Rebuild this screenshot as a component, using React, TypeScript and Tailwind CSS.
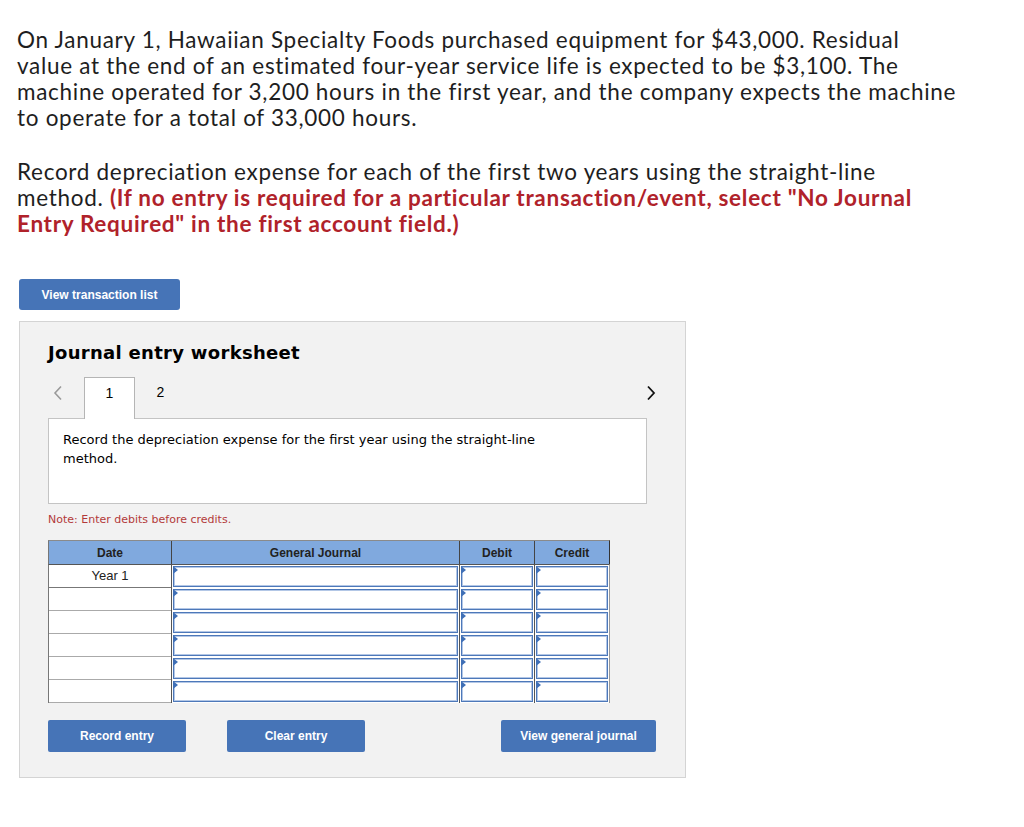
import React from "react";

const Tri = () => (
  <span className="absolute left-[1px] top-[1px] w-0 h-0 border-y-[4px] border-y-transparent border-l-[5px] border-l-[#3f6fb6]" />
);

function InputCell({ w }: { w: string }) {
  return (
    <div className={`relative h-[23px] ${w} border-l border-[#555] bg-white p-[1px]`}>
      <div className="h-full w-full border border-[#4d78b9] shadow-[inset_0_0_0_1px_#b3c7e6] bg-white" />
      <Tri />
    </div>
  );
}

export default function App() {
  const rows = ["Year 1", "", "", "", "", ""];
  return (
    <div className="bg-white min-h-[827px] w-[1024px] text-[#1e1e1e]">
      <div className="pl-[17px] pt-[27px] font-['Lato',sans-serif] text-[22.5px] leading-[26px] tracking-[0.7px] whitespace-nowrap">
        <p>
          On January 1, Hawaiian Specialty Foods purchased equipment for $43,000. Residual
          <br />
          value at the end of an estimated four-year service life is expected to be $3,100. The
          <br />
          machine operated for 3,200 hours in the first year, and the company expects the machine
          <br />
          to operate for a total of 33,000 hours.
        </p>
        <p className="mt-[28px]">
          Record depreciation expense for each of the first two years using the straight-line
          <br />
          method.{" "}
          <span className="font-bold text-[#b0222a]">
            (If no entry is required for a particular transaction/event, select "No Journal
            <br />
            Entry Required" in the first account field.)
          </span>
        </p>
      </div>

      <div className="pl-[19px] mt-[42px]">
        <button className="h-[31px] w-[161px] rounded-[3px] bg-[#4674b7] text-white text-[12px] font-bold font-['Liberation_Sans',Arial,sans-serif]">
          View transaction list
        </button>
      </div>

      <div className="ml-[19px] mt-[11px] w-[667px] border border-[#d4d4d4] bg-[#f2f2f2] pl-[28px] pr-[39px] pt-[20px] pb-[25px] font-['DejaVu_Sans',Verdana,sans-serif]">
        <h2 className="text-[18px] leading-[22px] font-bold tracking-[0.3px] text-black">Journal entry worksheet</h2>

        <div className="mt-[13px] flex items-end w-[610px] justify-between">
          <div className="flex items-end">
            <div className="w-[36px] h-[41px] flex items-center pl-[5px] pb-[10px]">
              <svg width="10" height="16" viewBox="0 0 10 16">
                <path d="M8 1.5 L2 8 L8 14.5" fill="none" stroke="#9a9a9a" strokeWidth="1.6" />
              </svg>
            </div>
            <div className="relative z-10 -mb-px w-[51px] h-[42px] bg-white border border-b-0 border-[#b5b5b5] flex items-center justify-center pb-[10px] text-[14px] font-['Liberation_Sans',Arial,sans-serif] text-black">
              1
            </div>
            <div className="w-[51px] h-[41px] flex items-center justify-center pb-[10px] text-[14px] font-['Liberation_Sans',Arial,sans-serif] text-black">2</div>
          </div>
          <div className="h-[41px] flex items-center pr-[2px] pb-[10px]">
            <svg width="10" height="16" viewBox="0 0 10 16">
              <path d="M2 1.5 L8 8 L2 14.5" fill="none" stroke="#111" strokeWidth="1.8" />
            </svg>
          </div>
        </div>

        <div className="w-[599px] h-[86px] bg-white border border-[#c4c4c4] pl-[14px] pr-[40px] pt-[11px] text-[13px] leading-[19px] text-black">
          Record the depreciation expense for the first year using the straight-line
          <br />
          method.
        </div>

        <p className="mt-[9px] text-[11px] leading-[14px] text-[#b33a3a]">Note: Enter debits before credits.</p>

        <div className="mt-[13px] w-[562px] font-['Liberation_Sans',Arial,sans-serif] text-[12px]">
          <div className="flex h-[24px] bg-[#80a9de] border-t border-[#8a8a8a] border-l border-l-[#777] border-r border-r-[#333] font-bold text-[#222]">
            <div className="w-[122px] flex items-center justify-center">Date</div>
            <div className="w-[288px] flex items-center justify-center border-l border-[#444]">General Journal</div>
            <div className="w-[75px] flex items-center justify-center border-l border-[#444]">Debit</div>
            <div className="w-[75px] flex items-center justify-center border-l border-[#444]">Credit</div>
          </div>
          <div className="border-l border-[#777] border-r border-r-[#999] border-t border-t-[#555]">
            {rows.map((r, i) => (
              <div key={i} className="flex">
                <div className={`w-[122px] h-[23px] bg-white flex items-center justify-center text-[13px] text-[#222] border-b ${i === 0 ? "border-[#777]" : "border-[#aaa]"}`}>
                  {r}
                </div>
                <InputCell w="w-[288px]" />
                <InputCell w="w-[75px]" />
                <InputCell w="w-[75px]" />
              </div>
            ))}
          </div>
        </div>

        <div className="mt-[17px] flex w-[608px] font-['Liberation_Sans',Arial,sans-serif]">
          <button className="h-[32px] w-[138px] rounded-[2px] bg-[#4674b7] text-white text-[12px] font-bold">Record entry</button>
          <button className="ml-[41px] h-[32px] w-[138px] rounded-[2px] bg-[#4674b7] text-white text-[12px] font-bold">Clear entry</button>
          <button className="ml-auto h-[32px] w-[155px] rounded-[2px] bg-[#4674b7] text-white text-[12px] font-bold">View general journal</button>
        </div>
      </div>
    </div>
  );
}
